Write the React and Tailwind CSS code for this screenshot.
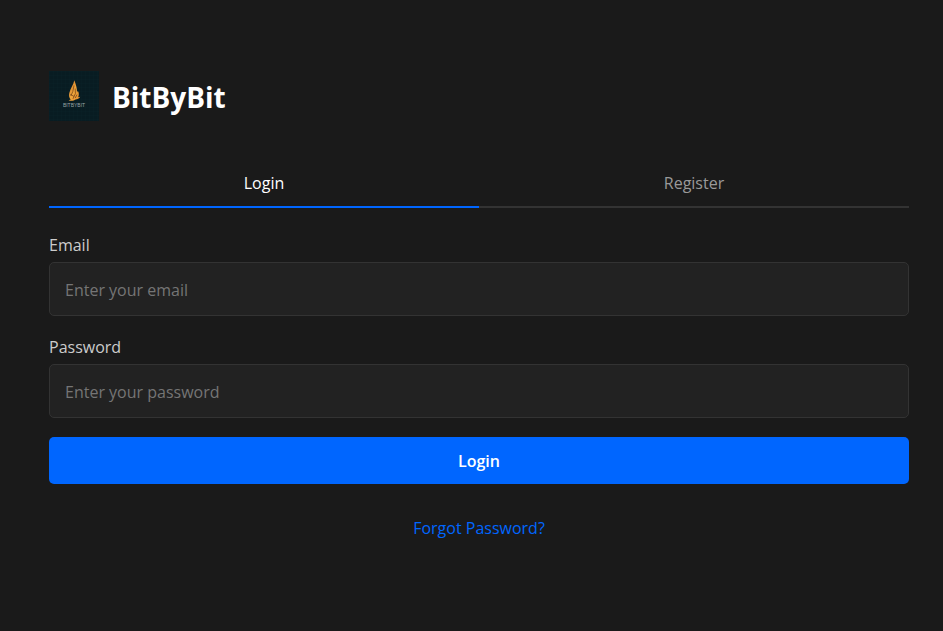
function Logo() {
  return (
    <svg viewBox="0 0 50 50" className="size-[50px] shrink-0" role="img" aria-label="BitByBit logo">
      <defs>
        <linearGradient id="flame" x1="0" y1="0" x2="1" y2="1">
          <stop offset="0" stopColor="#c96f22" />
          <stop offset="0.5" stopColor="#f0a63c" />
          <stop offset="1" stopColor="#e0882b" />
        </linearGradient>
        <pattern id="grid" width="4" height="4" patternUnits="userSpaceOnUse">
          <path d="M0 0H4M0 0V4" stroke="#0d252c" strokeWidth="0.5" />
        </pattern>
      </defs>
      <rect width="50" height="50" fill="#081c22" />
      <rect width="50" height="50" fill="url(#grid)" />
      <path
        d="M25.3 9.3C24.6 13.5 21.3 17.5 20.3 22C19.7 25 20.2 27 21.8 28.4L19.6 29.2C22.4 30.4 24.8 29.8 26.6 28.4C28.4 28.4 30.2 27.6 31.2 25.8L29.2 26.2C30.2 24.2 30 21.8 28.8 19.8L28 21.4C28.2 17.4 26.8 13.2 25.3 9.3Z"
        fill="url(#flame)"
      />
      <path
        d="M25 14.5L23.8 20.5L21.8 25M26.2 17.5L26.4 22.5L24 27.8M21.4 23.4L25 25.4M28 23.6L26.2 27"
        fill="none"
        stroke="#6b3b16"
        strokeWidth="0.7"
      />
      <text
        x="25"
        y="36"
        textAnchor="middle"
        className="fill-[#9aa3a5] font-['Liberation_Sans',sans-serif] text-[5px]"
      >
        BITBYBIT
      </text>
    </svg>
  );
}

function Field({ id, label, type, placeholder }) {
  return (
    <div className="mb-[19px] flex flex-col gap-[5px]">
      <label htmlFor={id} className="leading-6 text-[#cccccc]">
        {label}
      </label>
      <input
        id={id}
        type={type}
        placeholder={placeholder}
        className="h-[54px] w-full rounded-[5px] border border-[#333333] bg-[#222222] px-[15px] pt-0.5 text-white placeholder:text-[#757575]"
      />
    </div>
  );
}

export default function App() {
  return (
    <main className="min-h-screen bg-[#1a1a1a] pt-[71px] pr-[34px] pb-12 pl-[49px] font-['Open_Sans','Noto_Sans',sans-serif] text-base">
      <header className="mb-9 flex items-center gap-[13px]">
        <Logo />
        <h1 className="pt-0.5 text-[28px] leading-10 font-bold text-white">BitByBit</h1>
      </header>

      <div role="tablist" className="mb-[25px] flex">
        <button
          type="button"
          role="tab"
          aria-selected="true"
          className="h-[51px] flex-1 border-b-2 border-[#0066ff] pt-0.5 text-white"
        >
          Login
        </button>
        <button
          type="button"
          role="tab"
          aria-selected="false"
          className="h-[51px] flex-1 border-b-2 border-[#333333] pt-0.5 text-[#999999]"
        >
          Register
        </button>
      </div>

      <form onSubmit={(e) => e.preventDefault()}>
        <Field id="email" label="Email" type="email" placeholder="Enter your email" />
        <Field id="password" label="Password" type="password" placeholder="Enter your password" />
        <button type="submit" className="h-[47px] w-full rounded-[5px] bg-[#0066ff] font-semibold text-white">
          Login
        </button>
      </form>

      <p className="mt-8 text-center leading-6">
        <a href="#forgot" className="text-[#0066ff]">
          Forgot Password?
        </a>
      </p>
    </main>
  );
}
